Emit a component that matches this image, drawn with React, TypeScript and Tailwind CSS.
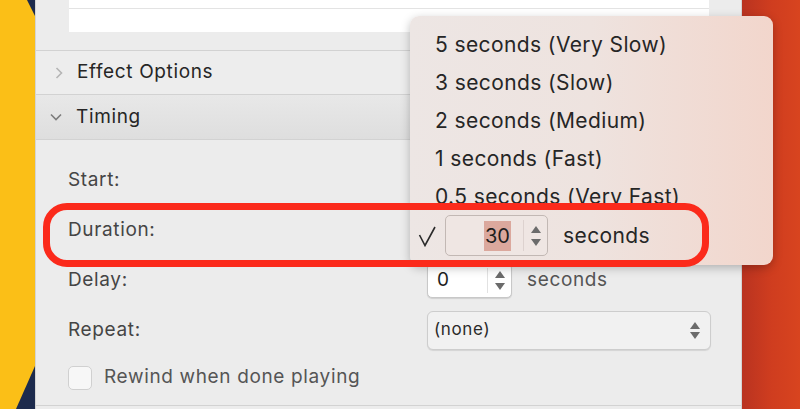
const menuItems = [
  "5 seconds (Very Slow)",
  "3 seconds (Slow)",
  "2 seconds (Medium)",
  "1 seconds (Fast)",
  "0.5 seconds (Very Fast)",
];

function Arrows({ gap }: { gap: string }) {
  return (
    <div className={`flex flex-col items-center ${gap}`}>
      <svg width="10" height="7" viewBox="0 0 10 7"><path d="M5 0L10 7H0Z" fill="#6b6b6b" /></svg>
      <svg width="10" height="7" viewBox="0 0 10 7"><path d="M0 0H10L5 7Z" fill="#6b6b6b" /></svg>
    </div>
  );
}

function Stepper({ value }: { value: string }) {
  return (
    <div className="flex h-[35px] w-[85px] items-stretch rounded-[5px] border border-[#c8c8c8] bg-white shadow-[0_1px_1px_rgba(0,0,0,0.12)]">
      <div className="flex flex-1 items-center px-[9px] text-[19px] text-[#1e1e1e]">{value}</div>
      <div className="my-[4px] flex w-[24px] items-center justify-center border-l border-[#e2e2e2]">
        <Arrows gap="gap-[5px]" />
      </div>
    </div>
  );
}

export default function App() {
  return (
    <div className="relative flex h-[409px] w-[800px] overflow-hidden font-['Inter',sans-serif] tracking-[0.04em]">
      {/* yellow slide edge */}
      <div className="relative w-[35px] bg-[#fbbf17]">
        <svg className="absolute left-0 top-0" width="35" height="409" viewBox="0 0 35 409">
          <path d="M27 0H35V16Z" fill="#1d2b4d" />
          <path d="M35 366V409H16Z" fill="#1d2b4d" />
        </svg>
      </div>

      {/* inspector panel */}
      <div className="flex w-[707px] flex-col border-l border-r border-[#d4d4d4] bg-[#ececec]">
        <div className="h-[51px] border-b border-[#d2d2d2] pl-[33px] pr-[32px]">
          <div className="h-[32px] bg-white">
            <div className="h-[9px] border-b border-[#e3e3e3]" />
          </div>
        </div>

        <div className="flex h-[44px] items-center border-b border-[#d2d2d2] bg-[#ededed]">
          <svg className="ml-[19px] mr-[14px]" width="8" height="12" viewBox="0 0 8 12">
            <path d="M1.5 1L6.5 6L1.5 11" stroke="#b5b5b5" strokeWidth="1.6" fill="none" />
          </svg>
          <span className="text-[19px] text-[#262626]">Effect Options</span>
        </div>

        <div className="flex h-[45px] items-center border-b border-[#d2d2d2] bg-gradient-to-b from-[#e8e8e8] to-[#dedede]">
          <svg className="ml-[14px] mr-[14px]" width="12" height="8" viewBox="0 0 12 8">
            <path d="M1 1.5L6 6.5L11 1.5" stroke="#7c7c7c" strokeWidth="1.6" fill="none" />
          </svg>
          <span className="text-[19px] text-[#262626]">Timing</span>
        </div>

        <div className="flex flex-1 flex-col pl-[32px] pt-[15px] text-[19px] text-[#454545]">
          <div className="flex h-[50px] items-center">
            <span className="w-[359px]">Start:</span>
          </div>
          <div className="flex h-[50px] items-center">
            <span className="w-[359px]">Duration:</span>
            <Stepper value="30" />
          </div>
          <div className="flex h-[50px] items-center">
            <span className="w-[359px]">Delay:</span>
            <Stepper value="0" />
            <span className="ml-[15px] text-[#555]">seconds</span>
          </div>
          <div className="flex h-[50px] items-center">
            <span className="w-[359px]">Repeat:</span>
            <div className="flex h-[39px] w-[284px] items-center justify-between rounded-[6px] border border-[#cdcdcd] bg-[#f1f1f1] pl-[6px] pr-[10px] shadow-[0_1px_1px_rgba(0,0,0,0.1)]">
              <span className="text-[17px] text-[#2a2a2a]">(none)</span>
              <Arrows gap="gap-[3px]" />
            </div>
          </div>
          <div className="flex h-[45px] items-center">
            <div className="mr-[12px] h-[24px] w-[24px] rounded-[5px] border border-[#d0d0d0] bg-[#f7f7f7]" />
            <span className="text-[#555]">Rewind when done playing</span>
          </div>
        </div>
        <div className="h-[4px] border-t border-[#d2d2d2]" />
      </div>

      {/* red slide edge */}
      <div className="flex-1 bg-gradient-to-r from-[#b93320] via-[#cf3d1f] to-[#d8441f]" />

      {/* duration popup */}
      <div className="absolute left-[410px] top-[16px] flex h-[249px] w-[363px] flex-col rounded-[9px] bg-gradient-to-r from-[#ede6e4] via-[#eee3df] to-[#f2d6cc] pt-[10px] tracking-[0.025em] shadow-[0_3px_10px_rgba(0,0,0,0.25)]">
        {menuItems.map((m) => (
          <div key={m} className="flex h-[38px] items-center pl-[25px] text-[21px] text-[#262626]">
            {m}
          </div>
        ))}
        <div className="mt-[-1px] flex items-center">
          <svg className="ml-[8px] mr-[9px]" width="18" height="22" viewBox="0 0 18 22">
            <path d="M1.5 10L7 20.5L17 2" stroke="#2a2a2a" strokeWidth="1.6" fill="none" />
          </svg>
          <div className="flex h-[41px] w-[103px] items-stretch rounded-[5px] border border-[#c2b8b4] bg-[#efe6e3]">
            <div className="flex flex-1 items-center justify-end pr-[12px]">
              <span className="bg-[#dba89d] px-[1px] text-[20px] tracking-normal text-[#1e1e1e]">30</span>
            </div>
            <div className="my-[4px] flex w-[24px] items-center justify-center border-l border-[#ddd2cf]">
              <Arrows gap="gap-[6px]" />
            </div>
          </div>
          <span className="ml-[15px] text-[21px] text-[#262626]">seconds</span>
        </div>
      </div>

      {/* annotation highlight */}
      <div className="pointer-events-none absolute left-[43px] top-[203px] h-[64px] w-[666px] rounded-[24px] border-[7px] border-[#fb2a1b]" />
    </div>
  );
}
